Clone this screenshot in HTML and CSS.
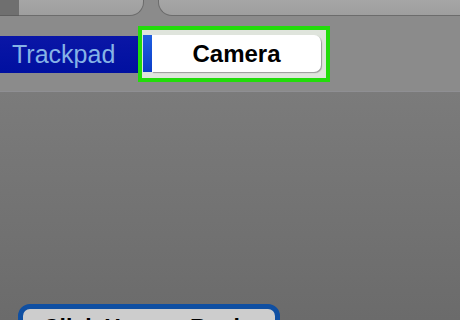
FILE: index.html
```html
<!DOCTYPE html>
<html lang="en">
<head>
    <meta charset="UTF-8">
    <meta name="viewport" content="width=device-width, initial-scale=1.0">
    <title>Camera</title>
    <link rel="stylesheet" href="styles.css">
</head>
<body>
    <div class="tabs">
        <div class="tab-stub"></div>
        <div class="tab tab-left"></div>
        <div class="tab-gap"></div>
        <div class="tab tab-right"></div>
    </div>

    <div class="band">
        <div class="segments">
            <div class="seg trackpad">Trackpad</div>
            <div class="highlight">
                <div class="seg-edge"></div>
                <div class="seg camera">Camera</div>
            </div>
        </div>
    </div>

    <div class="lower">
        <button class="begin">Click Here to Begin</button>
    </div>
</body>
</html>
```

FILE: styles.css
```css
html, body {
    margin: 0;
    padding: 0;
}
body {
    width: 460px;
    height: 320px;
    overflow: hidden;
    background: #8b8b8b;
    font-family: "Liberation Sans", Arial, sans-serif;
}

/* top tab strip */
.tabs {
    display: flex;
    height: 16px;
    background: #8b8b8b;
}
.tab-stub {
    width: 19px;
    height: 15px;
    background: #6f6f6f;
    border-bottom: 1px solid #5e5e5e;
}
.tab {
    height: 15px;
    background: linear-gradient(#a6a6a6, #9e9e9e);
    border-bottom: 1px solid #6c6c6c;
}
.tab-left {
    width: 124px;
    border-bottom-right-radius: 14px;
    border-right: 1px solid #6c6c6c;
}
.tab-gap {
    width: 14px;
}
.tab-right {
    flex: 1;
    border-bottom-left-radius: 14px;
    border-left: 1px solid #6c6c6c;
}

/* segmented control band */
.band {
    height: 75px;
    background: #8b8b8b;
    border-bottom: 1px solid #8f8f93;
}
.segments {
    display: flex;
    align-items: center;
    padding-top: 10px;
}
.seg {
    height: 37px;
    display: flex;
    align-items: center;
    font-size: 25px;
}
.trackpad {
    width: 126px;
    padding-left: 12px;
    background: linear-gradient(#0a16a6, #0010a0);
    color: #86b3e6;
}
.highlight {
    display: flex;
    width: 178px;
    height: 37px;
    padding: 5px 5px 6px 1px;
    border: 4px solid #22dc0a;
    background: #dfe4dc;
    align-items: flex-start;
}
.seg-edge {
    width: 9px;
    height: 37px;
    background: linear-gradient(#1f5fe0, #0b3cc8);
}
.camera {
    flex: 1;
    justify-content: center;
    background: #ffffff;
    color: #000000;
    font-weight: bold;
    font-size: 24px;
    border-radius: 0 7px 7px 0;
    box-shadow: 1px 1px 1px #9a9a9a;
}

/* lower area */
.lower {
    height: 228px;
    background: linear-gradient(#7b7b7b, #6b6b6b);
}
.begin {
    margin: 212px 0 0 18px;
    width: 262px;
    height: 46px;
    padding: 1px 0 0 20px;
    border: 5px solid #0f4fa2;
    border-radius: 12px;
    background: #cdcdcd;
    color: #000000;
    font-family: "Liberation Sans", Arial, sans-serif;
    font-weight: bold;
    font-size: 23px;
    line-height: 26px;
    text-align: left;
    vertical-align: top;
}
```
